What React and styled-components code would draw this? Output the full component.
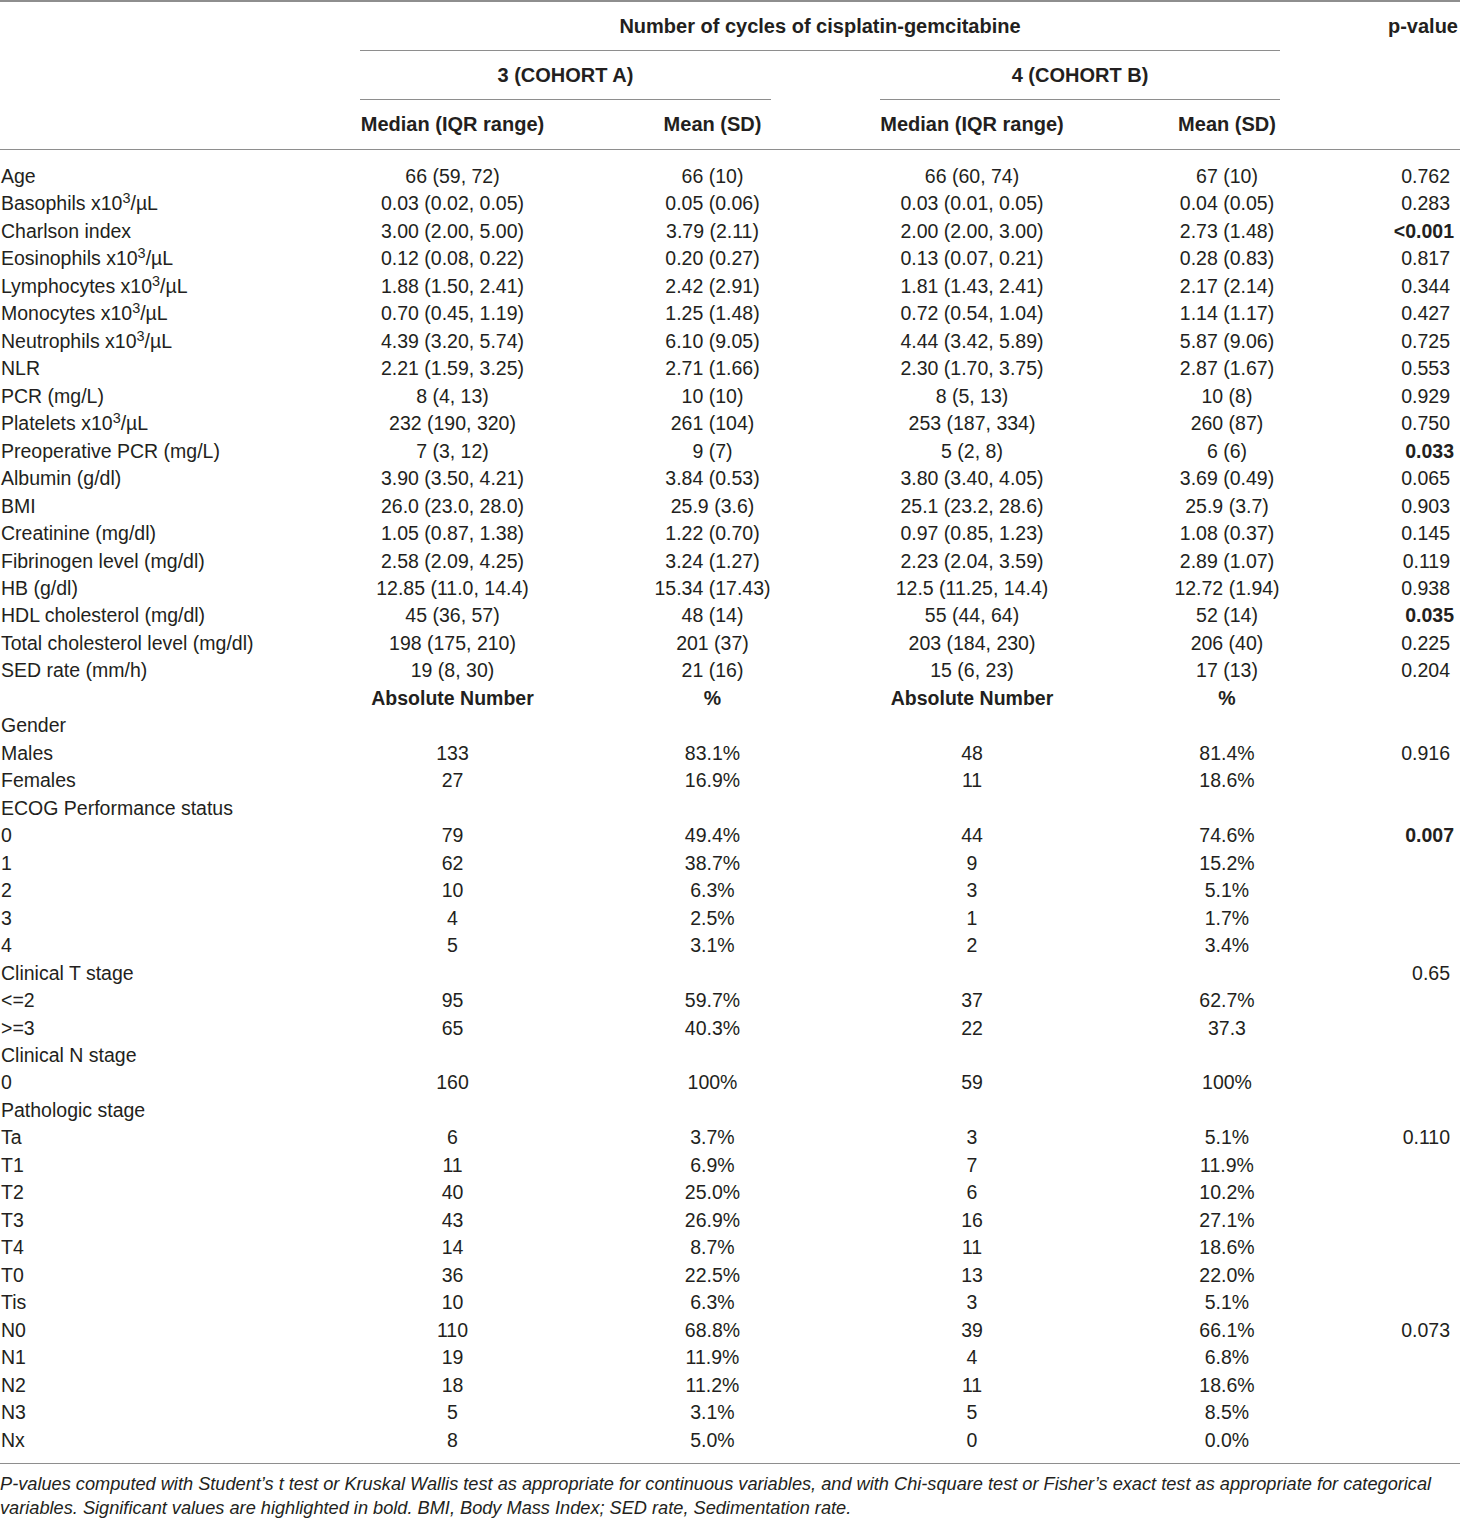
import React from "react";
import styled, { createGlobalStyle } from "styled-components";

const GlobalStyle = createGlobalStyle`
  html, body {
    margin: 0;
    padding: 0;
    background: #ffffff;
  }
  body {
    font-family: "Liberation Sans", Arial, sans-serif;
    color: #231f20;
  }
`;

const COLS = "360px 185px 335px 184px 326px 70px";
const RULE = "#8e8e8e";

const continuous = [
  ["Age", "66 (59, 72)", "66 (10)", "66 (60, 74)", "67 (10)", "0.762"],
  ["Basophils", "0.03 (0.02, 0.05)", "0.05 (0.06)", "0.03 (0.01, 0.05)", "0.04 (0.05)", "0.283", false, true],
  ["Charlson index", "3.00 (2.00, 5.00)", "3.79 (2.11)", "2.00 (2.00, 3.00)", "2.73 (1.48)", "<0.001", true],
  ["Eosinophils", "0.12 (0.08, 0.22)", "0.20 (0.27)", "0.13 (0.07, 0.21)", "0.28 (0.83)", "0.817", false, true],
  ["Lymphocytes", "1.88 (1.50, 2.41)", "2.42 (2.91)", "1.81 (1.43, 2.41)", "2.17 (2.14)", "0.344", false, true],
  ["Monocytes", "0.70 (0.45, 1.19)", "1.25 (1.48)", "0.72 (0.54, 1.04)", "1.14 (1.17)", "0.427", false, true],
  ["Neutrophils", "4.39 (3.20, 5.74)", "6.10 (9.05)", "4.44 (3.42, 5.89)", "5.87 (9.06)", "0.725", false, true],
  ["NLR", "2.21 (1.59, 3.25)", "2.71 (1.66)", "2.30 (1.70, 3.75)", "2.87 (1.67)", "0.553"],
  ["PCR (mg/L)", "8 (4, 13)", "10 (10)", "8 (5, 13)", "10 (8)", "0.929"],
  ["Platelets", "232 (190, 320)", "261 (104)", "253 (187, 334)", "260 (87)", "0.750", false, true],
  ["Preoperative PCR (mg/L)", "7 (3, 12)", "9 (7)", "5 (2, 8)", "6 (6)", "0.033", true],
  ["Albumin (g/dl)", "3.90 (3.50, 4.21)", "3.84 (0.53)", "3.80 (3.40, 4.05)", "3.69 (0.49)", "0.065"],
  ["BMI", "26.0 (23.0, 28.0)", "25.9 (3.6)", "25.1 (23.2, 28.6)", "25.9 (3.7)", "0.903"],
  ["Creatinine (mg/dl)", "1.05 (0.87, 1.38)", "1.22 (0.70)", "0.97 (0.85, 1.23)", "1.08 (0.37)", "0.145"],
  ["Fibrinogen level (mg/dl)", "2.58 (2.09, 4.25)", "3.24 (1.27)", "2.23 (2.04, 3.59)", "2.89 (1.07)", "0.119"],
  ["HB (g/dl)", "12.85 (11.0, 14.4)", "15.34 (17.43)", "12.5 (11.25, 14.4)", "12.72 (1.94)", "0.938"],
  ["HDL cholesterol (mg/dl)", "45 (36, 57)", "48 (14)", "55 (44, 64)", "52 (14)", "0.035", true],
  ["Total cholesterol level (mg/dl)", "198 (175, 210)", "201 (37)", "203 (184, 230)", "206 (40)", "0.225"],
  ["SED rate (mm/h)", "19 (8, 30)", "21 (16)", "15 (6, 23)", "17 (13)", "0.204"],
];

const categorical = [
  ["Gender"],
  ["Males", "133", "83.1%", "48", "81.4%", "0.916"],
  ["Females", "27", "16.9%", "11", "18.6%", ""],
  ["ECOG Performance status"],
  ["0", "79", "49.4%", "44", "74.6%", "0.007", true],
  ["1", "62", "38.7%", "9", "15.2%", ""],
  ["2", "10", "6.3%", "3", "5.1%", ""],
  ["3", "4", "2.5%", "1", "1.7%", ""],
  ["4", "5", "3.1%", "2", "3.4%", ""],
  ["Clinical T stage", "", "", "", "", "0.65"],
  ["<=2", "95", "59.7%", "37", "62.7%", ""],
  [">=3", "65", "40.3%", "22", "37.3", ""],
  ["Clinical N stage"],
  ["0", "160", "100%", "59", "100%", ""],
  ["Pathologic stage"],
  ["Ta", "6", "3.7%", "3", "5.1%", "0.110"],
  ["T1", "11", "6.9%", "7", "11.9%", ""],
  ["T2", "40", "25.0%", "6", "10.2%", ""],
  ["T3", "43", "26.9%", "16", "27.1%", ""],
  ["T4", "14", "8.7%", "11", "18.6%", ""],
  ["T0", "36", "22.5%", "13", "22.0%", ""],
  ["Tis", "10", "6.3%", "3", "5.1%", ""],
  ["N0", "110", "68.8%", "39", "66.1%", "0.073"],
  ["N1", "19", "11.9%", "4", "6.8%", ""],
  ["N2", "18", "11.2%", "11", "18.6%", ""],
  ["N3", "5", "3.1%", "5", "8.5%", ""],
  ["Nx", "8", "5.0%", "0", "0.0%", ""],
];

const Page = styled.div`
  width: 1460px;
  font-size: 19.5px;
`;

const Table = styled.div`
  border-top: 2px solid ${RULE};
  border-bottom: 1.5px solid ${RULE};
`;

const Head = styled.div`
  border-bottom: 1.5px solid ${RULE};
`;

const HeadRow = styled.div`
  display: grid;
  grid-template-columns: ${COLS};
  height: 49px;
`;

const HeadCell = styled.div`
  grid-column: ${(p) => p.$span || "auto"};
  margin-right: ${(p) => p.$inset || 0}px;
  display: flex;
  align-items: center;
  justify-content: ${(p) => (p.$right ? "flex-end" : "center")};
  padding-right: ${(p) => (p.$right ? "2px" : "0")};
  white-space: nowrap;
  font-weight: 700;
  font-size: 20px;
  border-bottom: ${(p) => (p.$rule ? `1.5px solid ${RULE}` : "none")};
  padding-top: ${(p) => (p.$rule ? "1px" : "0")};
`;

const Body = styled.div`
  padding: 13px 0 9px;
`;

const Row = styled.div`
  display: grid;
  grid-template-columns: ${COLS};
  height: 27.48px;
  align-items: center;
  line-height: 1;
  font-weight: ${(p) => (p.$head ? 700 : 400)};
`;

const Label = styled.div`
  padding-left: 1px;
  white-space: nowrap;
`;

const Value = styled.div`
  text-align: center;
  white-space: nowrap;
`;

const PValue = styled.div`
  text-align: right;
  white-space: nowrap;
  font-weight: ${(p) => (p.$bold ? 700 : 400)};
  padding-right: ${(p) => (p.$bold ? 6 : 10)}px;
`;

const Sup = styled.sup`
  font-size: 0.74em;
  line-height: 0;
  vertical-align: 0.5em;
`;

const Note = styled.p`
  margin: 0;
  padding-top: 8px;
  font-style: italic;
  font-size: 18.2px;
  line-height: 24px;
`;

const DataRow = ({ cells }) => {
  const [label, a, b, c, d, p, bold, unit] = cells;
  return (
    <Row>
      <Label>
        {label}
        {unit && (
          <>
            {" "}x10<Sup>3</Sup>/µL
          </>
        )}
      </Label>
      <Value>{a}</Value>
      <Value>{b}</Value>
      <Value>{c}</Value>
      <Value>{d}</Value>
      <PValue $bold={bold}>{p}</PValue>
    </Row>
  );
};

export default function App() {
  return (
    <Page>
      <GlobalStyle />
      <Table>
        <Head>
          <HeadRow>
            <div />
            <HeadCell $span="2 / 6" $inset={110} $rule>
              Number of cycles of cisplatin-gemcitabine
            </HeadCell>
            <HeadCell $right>p-value</HeadCell>
          </HeadRow>
          <HeadRow>
            <div />
            <HeadCell $span="2 / 4" $inset={109} $rule>
              3 (COHORT A)
            </HeadCell>
            <HeadCell $span="4 / 6" $inset={110} $rule>
              4 (COHORT B)
            </HeadCell>
          </HeadRow>
          <HeadRow>
            <div />
            <HeadCell>Median (IQR range)</HeadCell>
            <HeadCell>Mean (SD)</HeadCell>
            <HeadCell>Median (IQR range)</HeadCell>
            <HeadCell>Mean (SD)</HeadCell>
          </HeadRow>
        </Head>
        <Body>
          {continuous.map((r, i) => (
            <DataRow key={`c${i}`} cells={r} />
          ))}
          <Row $head>
            <div />
            <Value>Absolute Number</Value>
            <Value>%</Value>
            <Value>Absolute Number</Value>
            <Value>%</Value>
          </Row>
          {categorical.map((r, i) =>
            r.length === 1 ? (
              <Row key={`g${i}`}>
                <Label>{r[0]}</Label>
              </Row>
            ) : (
              <DataRow key={`g${i}`} cells={r} />
            )
          )}
        </Body>
      </Table>
      <Note>
        P-values computed with Student’s t test or Kruskal Wallis test as appropriate for continuous
        variables, and with Chi-square test or Fisher’s exact test as appropriate for categorical
        variables. Significant values are highlighted in bold. BMI, Body Mass Index; SED rate,
        Sedimentation rate.
      </Note>
    </Page>
  );
}
